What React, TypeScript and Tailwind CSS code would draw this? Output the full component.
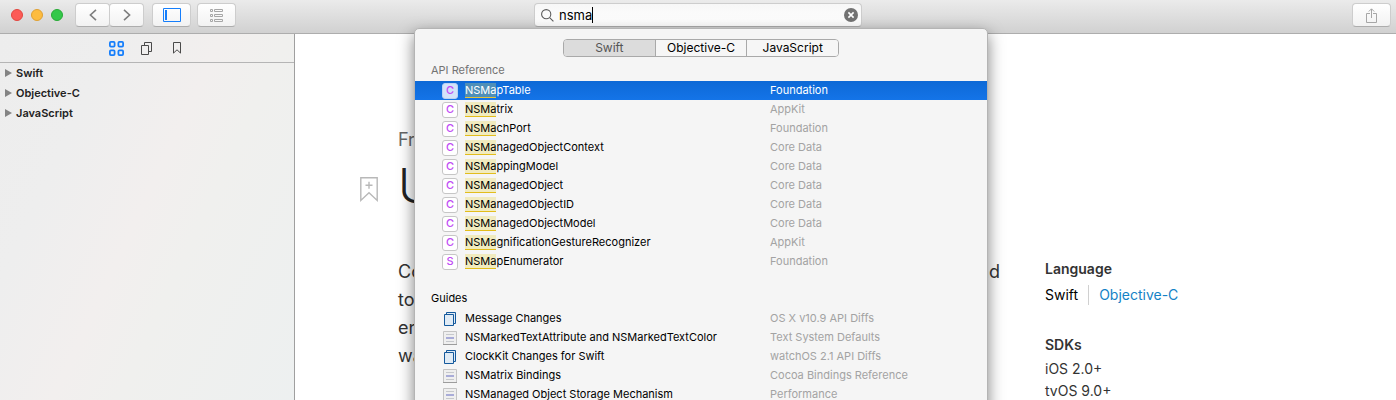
import { useState } from "react";
import type { ReactNode } from "react";

type Result = { kind: "C" | "S" | "changes" | "guide"; match?: string; rest: string; source: string };

const apiResults: Result[] = [
  { kind: "C", match: "NSMa", rest: "pTable", source: "Foundation" },
  { kind: "C", match: "NSMa", rest: "trix", source: "AppKit" },
  { kind: "C", match: "NSMa", rest: "chPort", source: "Foundation" },
  { kind: "C", match: "NSMa", rest: "nagedObjectContext", source: "Core Data" },
  { kind: "C", match: "NSMa", rest: "ppingModel", source: "Core Data" },
  { kind: "C", match: "NSMa", rest: "nagedObject", source: "Core Data" },
  { kind: "C", match: "NSMa", rest: "nagedObjectID", source: "Core Data" },
  { kind: "C", match: "NSMa", rest: "nagedObjectModel", source: "Core Data" },
  { kind: "C", match: "NSMa", rest: "gnificationGestureRecognizer", source: "AppKit" },
  { kind: "S", match: "NSMa", rest: "pEnumerator", source: "Foundation" },
];

const guideResults: Result[] = [
  { kind: "changes", rest: "Message Changes", source: "OS X v10.9 API Diffs" },
  { kind: "guide", rest: "NSMarkedTextAttribute and NSMarkedTextColor", source: "Text System Defaults" },
  { kind: "changes", rest: "ClockKit Changes for Swift", source: "watchOS 2.1 API Diffs" },
  { kind: "guide", rest: "NSMatrix Bindings", source: "Cocoa Bindings Reference" },
  { kind: "guide", rest: "NSManaged Object Storage Mechanism", source: "Performance" },
];

const languages = ["Swift", "Objective-C", "JavaScript"];

function ToolbarButton({ label, className, children }: { label: string; className: string; children: ReactNode }) {
  return (
    <button
      type="button"
      aria-label={label}
      className={`flex h-6 items-center justify-center rounded border border-[#cdcdcd] border-b-[#adadad] bg-gradient-to-b from-white to-[#f2f2f2] ${className}`}
    >
      {children}
    </button>
  );
}

function KindIcon({ kind, selected }: { kind: Result["kind"]; selected: boolean }) {
  if (kind === "changes") {
    return (
      <svg width="16" height="16" viewBox="0 0 16 16" fill="#e0ebf5" stroke="#14599c" aria-hidden="true">
        <path d="M4.5 1.5h9v11h-9z" />
        <path d="M2.5 3.5h9v11h-9z" />
      </svg>
    );
  }
  if (kind === "guide") {
    return (
      <svg width="16" height="16" viewBox="0 0 16 16" fill="none" aria-hidden="true">
        <path d="M1.5 1.5h13v13h-13z" fill="#efefef" stroke="#c4c4c4" />
        <path d="M1 14.5h14" stroke="#9c9c9c" />
        <path d="M4 4.5h8M4 11.5h8" stroke="#c6c8cc" />
        <path d="M4 8h8" stroke="#a9acd8" strokeWidth="2" />
      </svg>
    );
  }
  return (
    <span
      className={`flex size-4 items-center justify-center rounded-[3px] border text-[11px] leading-none font-medium text-[#bf4df5] ${
        selected ? "border-[#b9d2f3] bg-[#d3e3f9]" : "border-[#c6c6c6] bg-white"
      }`}
    >
      {kind}
    </span>
  );
}

function ResultList({ results, selected, onSelect }: { results: Result[]; selected: string; onSelect: (s: string) => void }) {
  return (
    <ul>
      {results.map((r) => {
        const name = (r.match ?? "") + r.rest;
        const active = name === selected;
        return (
          <li key={name}>
            <button
              type="button"
              onClick={() => onSelect(name)}
              className={`grid h-[19px] w-full grid-cols-[16px_298px_1fr] items-center gap-x-[7px] pl-[27px] text-left text-[11px] leading-[13px] ${
                active ? "bg-gradient-to-b from-[#0d69d6] to-[#1474e8] text-white" : "text-black"
              }`}
            >
              <KindIcon kind={r.kind} selected={active} />
              <span className="whitespace-nowrap">
                {r.match && (
                  <mark
                    className={`border-b ${
                      active ? "border-[#e3c33a] bg-[#4f8fb8] text-white" : "border-[#e2bd1c] bg-[#f1ebbf] text-black"
                    }`}
                  >
                    {r.match}
                  </mark>
                )}
                {r.rest}
              </span>
              <span className={active ? "text-white" : "text-[#a3a3a3]"}>{r.source}</span>
            </button>
          </li>
        );
      })}
    </ul>
  );
}

function SearchPopover() {
  const [language, setLanguage] = useState("Swift");
  const [selected, setSelected] = useState("NSMapTable");
  return (
    <div className="absolute top-[25px] left-[-120px] z-10 h-screen w-[574px] overflow-hidden rounded-[5px] border border-[#b4b4b4] bg-[#f5f5f5] pt-[10px] shadow-[0_6px_16px_rgba(0,0,0,0.5)]">
      <div className="mx-auto flex h-[18px] w-[276px] divide-x divide-[#a9a9a9] overflow-hidden rounded border border-[#a9a9a9]">
        {languages.map((l) => (
          <button
            key={l}
            type="button"
            aria-pressed={l === language}
            onClick={() => setLanguage(l)}
            className={`flex-1 text-xs leading-4 ${l === language ? "bg-[#dcdcdc] text-[#555]" : "bg-[#f6f6f6] text-black"}`}
          >
            {l}
          </button>
        ))}
      </div>
      <h2 className="mt-0.5 flex h-[22px] items-center pl-4 text-[11px] text-[#737373]">API Reference</h2>
      <ResultList results={apiResults} selected={selected} onSelect={setSelected} />
      <h2 className="mt-4 flex h-[22px] items-center pl-4 text-[11px] text-black">Guides</h2>
      <ResultList results={guideResults} selected={selected} onSelect={setSelected} />
    </div>
  );
}

function SearchField() {
  const [query, setQuery] = useState("nsma");
  return (
    <div className="relative">
      <div className="flex h-6 items-center rounded border border-[#cdcdcd] border-b-[#adadad] bg-gradient-to-b from-[#f7f7f7] to-white pr-[3px] pl-1.5">
        <svg width="13" height="13" viewBox="0 0 13 13" fill="none" stroke="#5c5c5c" strokeWidth="1.1" aria-hidden="true">
          <circle cx="5.2" cy="5.2" r="4.6" />
          <path d="M8.6 8.6 12.4 12.4" />
        </svg>
        <div className="relative ml-[5px] flex flex-1 items-center">
          <input
            type="text"
            aria-label="Search documentation"
            value={query}
            onChange={(e) => setQuery(e.target.value)}
            className="w-full bg-transparent text-[13px] leading-4 text-black caret-transparent outline-none"
          />
          <span className="absolute left-[33px] h-4 w-px bg-black" />
        </div>
        <button type="button" aria-label="Clear search" onClick={() => setQuery("")}>
          <svg width="14" height="14" viewBox="0 0 14 14" aria-hidden="true">
            <circle cx="7" cy="7" r="7" fill="#737373" />
            <path d="M4.4 4.4 9.6 9.6M9.6 4.4 4.4 9.6" stroke="#fff" strokeWidth="1.6" />
          </svg>
        </button>
      </div>
      <SearchPopover />
    </div>
  );
}

function Toolbar() {
  return (
    <header className="grid h-[34px] shrink-0 grid-cols-[1fr_328px_1fr] items-start border-b border-[#adadad] bg-gradient-to-b from-[#ebebeb] to-[#d1d1d1] pt-[3px]">
      <div className="flex items-center pl-[11px]">
        <div className="flex gap-2">
          <button type="button" aria-label="Close" className="size-3 rounded-full border border-[#e2463f] bg-[#fc5b57]" />
          <button type="button" aria-label="Minimize" className="size-3 rounded-full border border-[#dfa033] bg-[#fdbc40]" />
          <button type="button" aria-label="Zoom" className="size-3 rounded-full border border-[#27aa35] bg-[#34c84a]" />
        </div>
        <div className="ml-3 flex">
          <ToolbarButton label="Back" className="w-[35px]">
            <svg width="8" height="12" viewBox="0 0 8 12" fill="none" stroke="#7d7d7d" strokeWidth="1.6">
              <path d="M7 .8 1.4 6 7 11.2" />
            </svg>
          </ToolbarButton>
          <ToolbarButton label="Forward" className="-ml-px w-[35px]">
            <svg width="8" height="12" viewBox="0 0 8 12" fill="none" stroke="#7d7d7d" strokeWidth="1.6">
              <path d="M1 .8 6.6 6 1 11.2" />
            </svg>
          </ToolbarButton>
        </div>
        <ToolbarButton label="Toggle navigator" className="ml-2 w-[39px]">
          <svg width="18" height="14" viewBox="0 0 18 14" fill="none" stroke="#157efb">
            <path d="M.5 .5h17v13H.5z" />
            <path d="M3 2v10" strokeWidth="2" />
          </svg>
        </ToolbarButton>
        <ToolbarButton label="Table of contents" className="ml-1.5 w-[39px]">
          <svg width="13" height="13" viewBox="0 0 13 13" fill="none" stroke="#a6a6a6">
            <path d="M.5 .5h2v2h-2zM.5 5.5h2v2h-2zM.5 10.5h2v2h-2zM4.5 .5h8v2h-8zM4.5 5.5h8v2h-8zM4.5 10.5h8v2h-8z" />
          </svg>
        </ToolbarButton>
      </div>
      <SearchField />
      <div className="flex justify-end pr-[5px]">
        <ToolbarButton label="Share" className="w-[39px]">
          <svg width="11" height="15" viewBox="0 0 11 15" fill="none" stroke="#a6a6a6">
            <path d="M4 5.5H.5v9h10v-9H7" />
            <path d="M5.5 10V1M2.8 3.5 5.5 .8 8.2 3.5" />
          </svg>
        </ToolbarButton>
      </div>
    </header>
  );
}

function Sidebar() {
  return (
    <nav className="w-[295px] shrink-0 border-r border-[#9f9f9f] bg-[linear-gradient(115deg,#ededed_0%,#eeeeee_25%,#f2efee_48%,#f0f0ee_62%,#edf0f0_100%)]">
      <div className="flex h-[29px] items-center border-b border-[#b5b5b5] pl-[109px]">
        <button type="button" aria-label="Contents">
          <svg width="15" height="15" viewBox="0 0 15 15" fill="none" stroke="#157efb" strokeWidth="1.8">
            <rect x=".9" y=".9" width="4.7" height="4.7" rx="1" />
            <rect x="9.4" y=".9" width="4.7" height="4.7" rx="1" />
            <rect x=".9" y="9.4" width="4.7" height="4.7" rx="1" />
            <rect x="9.4" y="9.4" width="4.7" height="4.7" rx="1" />
          </svg>
        </button>
        <button type="button" aria-label="Pages" className="ml-[17px]">
          <svg width="11" height="13" viewBox="0 0 11 13" fill="none" stroke="#4a4a4a">
            <path d="M3.5 3.5v-3h7v9h-3" />
            <path d="M.5 3.5h7v9h-7z" />
          </svg>
        </button>
        <button type="button" aria-label="Bookmarks" className="ml-[21px]">
          <svg width="8" height="12" viewBox="0 0 8 12" fill="none" stroke="#4a4a4a">
            <path d="M.5 .5h7v10.6L4 7.8 .5 11.1z" />
          </svg>
        </button>
      </div>
      <ul>
        {languages.map((l) => (
          <li key={l}>
            <button
              type="button"
              aria-expanded={false}
              className="flex h-5 w-full items-center gap-1 pl-[5px] text-[11px] font-semibold text-[#222]"
            >
              <svg width="7" height="8" viewBox="0 0 7 8" aria-hidden="true">
                <path d="M0 0 7 4 0 8z" fill="#848484" />
              </svg>
              {l}
            </button>
          </li>
        ))}
      </ul>
    </nav>
  );
}

function Page() {
  return (
    <main className="flex min-w-0 flex-1 bg-white text-[#333]">
      <article className="min-w-0 flex-1 pt-[94px] pl-[103px]">
        <p className="text-lg leading-6 text-[#666]">Fra</p>
        <div className="-ml-[38px] flex items-center pt-0.5">
          <button type="button" aria-label="Add bookmark" className="w-[38px] pt-1.5">
            <svg width="18" height="25" viewBox="0 0 18 25" fill="none" stroke="#b8b8b8" strokeWidth="1.4">
              <path d="M.8 .8h16.4v22.6L9 15.8 .8 23.4z" />
              <path d="M9 4.8v7M5.5 8.3h7" />
            </svg>
          </button>
          <h1 className="text-5xl leading-[64px] font-light text-[#222]">U</h1>
        </div>
        <div className="pt-10 text-lg leading-7">
          <p className="flex justify-between">
            <span>Co</span>
            <span>nd</span>
          </p>
          <p>to</p>
          <p>en</p>
          <p>wa</p>
        </div>
      </article>
      <aside className="w-[396px] shrink-0 pt-[224px] pl-[45px] text-sm leading-[22px]">
        <h2 className="font-semibold">Language</h2>
        <div className="mt-1 flex items-center">
          <span className="text-black">Swift</span>
          <span className="mx-[10px] h-5 w-px bg-[#d0d0d0]" />
          <a href="#objective-c" className="text-[#1482c6]">
            Objective-C
          </a>
        </div>
        <h2 className="mt-7 font-semibold">SDKs</h2>
        <ul className="mt-0.5">
          <li>iOS 2.0+</li>
          <li>tvOS 9.0+</li>
        </ul>
      </aside>
    </main>
  );
}

export default function App() {
  return (
    <div className="flex h-screen flex-col overflow-hidden font-['Inter','Liberation_Sans',sans-serif]">
      <Toolbar />
      <div className="flex min-h-0 flex-1 overflow-hidden">
        <Sidebar />
        <Page />
      </div>
    </div>
  );
}
